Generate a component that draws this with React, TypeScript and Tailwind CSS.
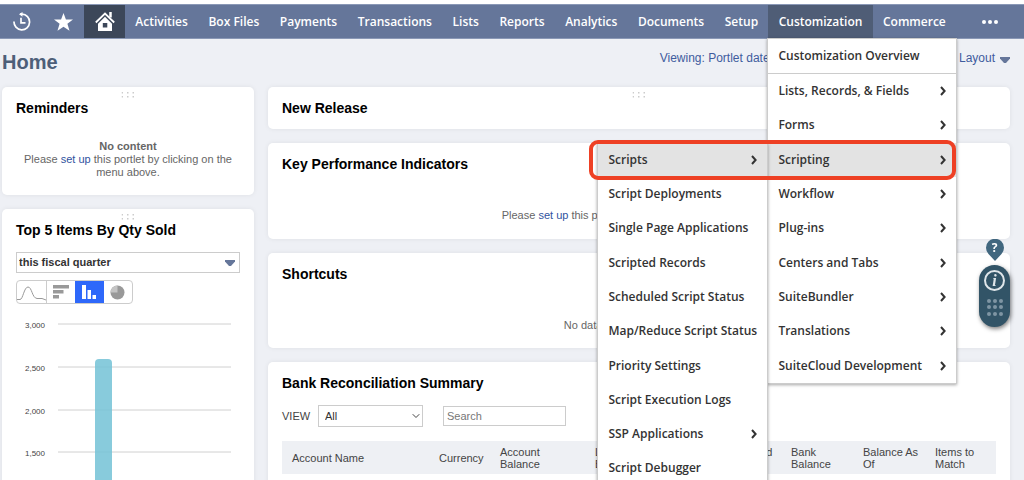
import type { ReactNode } from 'react';
import { ChevronDown } from 'lucide-react';
import clsx from 'clsx';

const tabs = [
  'Activities',
  'Box Files',
  'Payments',
  'Transactions',
  'Lists',
  'Reports',
  'Analytics',
  'Documents',
  'Setup',
  'Customization',
  'Commerce',
];

const customizationItems = [
  'Lists, Records, & Fields',
  'Forms',
  'Scripting',
  'Workflow',
  'Plug-ins',
  'Centers and Tabs',
  'SuiteBundler',
  'Translations',
  'SuiteCloud Development',
];

const scriptingItems = [
  { label: 'Scripts', children: true },
  { label: 'Script Deployments' },
  { label: 'Single Page Applications' },
  { label: 'Scripted Records' },
  { label: 'Scheduled Script Status' },
  { label: 'Map/Reduce Script Status' },
  { label: 'Priority Settings' },
  { label: 'Script Execution Logs' },
  { label: 'SSP Applications', children: true },
  { label: 'Script Debugger' },
];

const gridLines = [
  { label: '3,000', y: 8 },
  { label: '2,500', y: 51 },
  { label: '2,000', y: 94 },
  { label: '1,500', y: 136 },
];

export default function App() {
  return (
    <div className="h-screen overflow-hidden bg-[#eef0f5] font-['Liberation_Sans',Arial,sans-serif] text-[11px] text-[#666]">
      <NavBar />
      <PageHeader />
      <main className="grid grid-cols-[252px_1fr] items-start gap-3.5 pr-3.5 pl-0.5">
        <div className="flex flex-col gap-3.5">
          <Portlet title="Reminders" grip className="min-h-[108px]">
            <p className="mt-[23px] text-center leading-[13px]">
              <strong className="block">No content</strong>
              Please <SetUpLink /> this portlet by clicking on the menu above.
            </p>
          </Portlet>
          <TopItems />
        </div>
        <div className="flex min-w-0 flex-col gap-3.5">
          <Portlet title="New Release" grip className="min-h-[42px]" />
          <Portlet title="Key Performance Indicators" className="min-h-[96px]">
            <p className="mt-9 text-center leading-[13px]">
              Please <SetUpLink /> this portlet by clicking on the menu above.
            </p>
          </Portlet>
          <Portlet title="Shortcuts" className="min-h-[95px]">
            <p className="mt-9 text-center leading-[13px]">
              No data found for this shortcut.
            </p>
          </Portlet>
          <BankReconciliation />
        </div>
      </main>
      <HelpWidget />
    </div>
  );
}

function NavBar() {
  return (
    <header className="bg-white pt-1">
      <nav className="flex h-[35px] items-stretch border-y border-[#8a98b6] bg-[#65769a] font-['Open_Sans',sans-serif] text-xs font-semibold text-white">
        <button aria-label="Recent records" className="flex w-[43px] items-center justify-center">
          <HistoryIcon />
        </button>
        <button aria-label="Shortcuts" className="flex w-[41px] items-center justify-center">
          <StarIcon />
        </button>
        <button aria-label="Home" className="flex w-[41px] items-center justify-center bg-[#3c4759]">
          <HomeIcon />
        </button>
        <ul className="flex flex-1">
          {tabs.map((tab) => (
            <li key={tab} className="relative flex grow">
              <a
                href="#"
                className={clsx(
                  'flex grow items-center justify-center px-2.5',
                  tab === 'Customization' && 'bg-[#4f5d76]',
                )}
              >
                {tab}
              </a>
              {tab === 'Customization' && <CustomizationMenu />}
            </li>
          ))}
        </ul>
        <button aria-label="More" className="flex w-[68px] items-center justify-center gap-0.5">
          <span className="size-1 rounded-full bg-white" />
          <span className="size-1 rounded-full bg-white" />
          <span className="size-1 rounded-full bg-white" />
        </button>
      </nav>
    </header>
  );
}

function CustomizationMenu() {
  return (
    <div className="absolute top-full -left-px z-20 w-[190px] border border-[#ccc] bg-white text-[#333] shadow-[0_1px_3px_rgba(0,0,0,0.35)]">
      <a href="#" className="flex h-[35px] items-center border-b border-[#ccc] px-2.5">
        Customization Overview
      </a>
      <ul className="grid h-[309px] auto-rows-fr">
        {customizationItems.map((item) => (
          <li key={item} className="relative">
            <MenuLink label={item} arrow active={item === 'Scripting'} />
            {item === 'Scripting' && (
              <>
                <ScriptingMenu />
                <div className="pointer-events-none absolute -top-[3px] -left-[179px] z-30 h-10 w-[367px] rounded-[9px] border-4 border-[#ee4024]" />
              </>
            )}
          </li>
        ))}
      </ul>
    </div>
  );
}

function ScriptingMenu() {
  return (
    <ul className="absolute top-0 right-full grid h-[343px] w-[171px] auto-rows-fr border-x border-[#ccc] bg-white shadow-[0_1px_3px_rgba(0,0,0,0.35)]">
      {scriptingItems.map((item) => (
        <li key={item.label}>
          <MenuLink
            label={item.label}
            arrow={item.children}
            active={item.label === 'Scripts'}
          />
        </li>
      ))}
    </ul>
  );
}

interface MenuLinkProps {
  label: string;
  arrow?: boolean;
  active?: boolean;
}

function MenuLink({ label, arrow, active }: MenuLinkProps) {
  return (
    <a
      href="#"
      className={clsx(
        'flex h-full items-center justify-between px-2.5 whitespace-nowrap',
        active && 'bg-[#e3e3e3]',
      )}
    >
      {label}
      {arrow && (
        <svg width="6" height="10" viewBox="0 0 6 10" fill="none" stroke="#333" strokeWidth="2">
          <path d="M1 1l3.6 4L1 9" />
        </svg>
      )}
    </a>
  );
}

function PageHeader() {
  return (
    <div className="flex h-12 items-start justify-between pr-3.5 pl-0.5">
      <h1 className="pt-[11px] text-xl leading-6 font-bold text-[#4d5f79]">Home</h1>
      <div className="flex gap-[41px] pt-[11px] text-xs leading-4 text-[#3f5c9e]">
        <a href="#">Viewing: Portlet date settings</a>
        <a href="#">Personalize</a>
        <a href="#" className="flex items-center gap-[5px]">
          Layout
          <span className="pt-1">
            <Triangle />
          </span>
        </a>
      </div>
    </div>
  );
}

interface PortletProps {
  title: string;
  grip?: boolean;
  className?: string;
  children?: ReactNode;
}

function Portlet({ title, grip, className, children }: PortletProps) {
  return (
    <section
      className={clsx(
        'relative rounded-[5px] bg-white px-3.5 pt-3 shadow-[0_0_5px_rgba(0,0,0,0.07)]',
        className,
      )}
    >
      {grip && <Grip />}
      <h2 className="text-sm leading-[18px] font-bold text-black">{title}</h2>
      {children}
    </section>
  );
}

function TopItems() {
  return (
    <Portlet title="Top 5 Items By Qty Sold" grip className="min-h-[340px]">
      <div className="relative mt-[13px]">
        <select
          aria-label="Period"
          className="block h-[21px] w-full appearance-none border border-[#ccc] bg-white pl-0.5 text-[11px] font-bold text-[#333]"
        >
          <option>this fiscal quarter</option>
        </select>
        <span className="pointer-events-none absolute top-2 right-[5px]">
          <Triangle />
        </span>
      </div>
      <div className="mt-[7px] flex h-6 w-[117px] overflow-hidden rounded border border-[#ccc]">
        <button aria-label="Line chart" className="flex flex-1 items-center justify-center border-r border-[#ccc]">
          <svg width="29" height="22" viewBox="0 0 29 22" fill="none" stroke="#999" strokeWidth="1">
            <path d="M0 18.500h3c3 0 4-12.500 8-12.500s4 11 9 11.500h5l4 1.500" />
          </svg>
        </button>
        <button aria-label="Horizontal bar chart" className="flex flex-1 items-center justify-center">
          <svg width="16" height="14" viewBox="0 0 16 14" fill="#999">
            <path d="M0 0h16v3.500H0zM0 5h10.500v3.500H0zM0 10h6v3.500H0z" />
          </svg>
        </button>
        <button aria-label="Column chart" className="flex flex-1 items-center justify-center bg-[#2e68fa]">
          <svg width="14" height="14" viewBox="0 0 14 14" fill="#fff">
            <path d="M0 0h4v14H0zM5.500 5h3.500v9H5.500zM10.500 10h3.500v4h-3.500z" />
          </svg>
        </button>
        <button aria-label="Pie chart" className="flex flex-1 items-center justify-center">
          <svg width="15" height="15" viewBox="0 0 15 15">
            <circle cx="7.500" cy="7.500" r="7" fill="#999" />
            <path d="M7.500 7.500V.5A7 7 0 0 0 .5 7.500z" fill="#c4c4c4" />
          </svg>
        </button>
      </div>
      <svg className="mt-3 block w-full" height="190" role="img" aria-label="Quantity sold">
        {gridLines.map((line) => (
          <g key={line.label}>
            <text x="29" y={line.y + 4} textAnchor="end" fontSize="8" fill="#444">
              {line.label}
            </text>
            <line x1="42" x2="215" y1={line.y} y2={line.y} stroke="#d0d0d0" />
          </g>
        ))}
        <rect x="79" y="43" width="17" height="160" rx="4" fill="#73c2d6" fillOpacity="0.85" />
      </svg>
    </Portlet>
  );
}

function BankReconciliation() {
  return (
    <Portlet title="Bank Reconciliation Summary" className="min-h-[160px]">
      <div className="mt-[13px] flex items-center text-[#444]">
        <label htmlFor="view" className="w-9">
          VIEW
        </label>
        <div className="relative">
          <select
            id="view"
            className="block h-[22px] w-[105px] appearance-none border border-[#ccc] bg-white pl-1.5 text-[11px] text-[#333]"
          >
            <option>All</option>
          </select>
          <ChevronDown className="pointer-events-none absolute top-[5px] right-px size-3" />
        </div>
        <input
          aria-label="Search"
          placeholder="Search"
          className="ml-5 h-5 w-[123px] border border-[#ccc] bg-white px-[3px] text-[11px] placeholder:text-[#777]"
        />
      </div>
      <table className="mt-3.5 w-full table-fixed bg-[#eef0f4] text-left text-[11px] leading-3 text-[#444]">
        <thead>
          <tr className="h-[33px]">
            <th className="w-[147px] pl-2.5 font-normal">Account Name</th>
            <th className="w-[61px] pl-2.5 font-normal">Currency</th>
            <th className="w-[95px] pl-2.5 font-normal">
              Account
              <br />
              Balance
            </th>
            <th className="pl-2.5 font-normal">
              Ledger
              <br />
              Balance
            </th>
            <th className="w-[73px] pl-2.5 font-normal">
              Reconciled
              <br />
              Balance
            </th>
            <th className="w-[72px] pl-2.5 font-normal">
              Bank
              <br />
              Balance
            </th>
            <th className="w-[72px] pl-2.5 font-normal">
              Balance As
              <br />
              Of
            </th>
            <th className="w-[71px] pl-2.5 font-normal">
              Items to
              <br />
              Match
            </th>
          </tr>
        </thead>
      </table>
    </Portlet>
  );
}

function HelpWidget() {
  return (
    <aside className="fixed top-[239px] right-3.5 flex flex-col items-center gap-1">
      <button aria-label="Help" className="relative">
        <svg width="18" height="22" viewBox="0 0 18 22" className="block">
          <path d="M9 22L2.500 15a9 9 0 1 1 13 0z" fill="#41677f" />
        </svg>
        <span className="absolute inset-x-0 top-0 text-center font-['Open_Sans',sans-serif] text-xs leading-[18px] font-bold text-white">
          ?
        </span>
      </button>
      <div className="flex h-[62px] w-[31px] flex-col items-center gap-2 rounded-full bg-[#325467] pt-[5px] shadow-[1px_2px_4px_rgba(0,0,0,0.5)]">
        <button
          aria-label="Information"
          className="flex size-[21px] items-center justify-center rounded-full border-2 border-[#dfe6ea] font-['Liberation_Serif',serif] text-base leading-4 font-bold text-[#dfe6ea] italic"
        >
          i
        </button>
        <svg width="16" height="17" viewBox="0 0 16 17" fill="#7f95a3">
          {[2, 8, 14].map((cx) =>
            [2, 8, 15].map((cy) => <circle key={`${cx}-${cy}`} cx={cx} cy={cy} r="2" />),
          )}
        </svg>
      </div>
    </aside>
  );
}

function Grip() {
  return (
    <svg
      className="absolute top-[5px] left-1/2 -translate-x-1/2"
      width="13"
      height="6"
      viewBox="0 0 13 6"
      fill="#ccc"
    >
      <path d="M0 0h1.500v1.500H0zM5.500 0h1.500v1.500H5.500zM11 0h1.500v1.500H11zM0 4h1.500v1.500H0zM5.500 4h1.500v1.500H5.500zM11 4h1.500v1.500H11z" />
    </svg>
  );
}

function SetUpLink() {
  return (
    <a href="#" className="text-[#2f52a0]">
      set up
    </a>
  );
}

function Triangle() {
  return (
    <svg width="10" height="6" viewBox="0 0 10 6" fill="#65769a">
      <path d="M0 0h10v1.500L6 6H4L0 1.500z" />
    </svg>
  );
}

function HistoryIcon() {
  return (
    <svg width="18" height="19" viewBox="0 0 18 19" fill="none" stroke="#fff" strokeWidth="1.700">
      <path d="M1 9.500A7.800 7.800 0 1 0 9 2.200H7" />
      <path d="M9.500 0L6 2.300l3.500 2.500z" fill="#fff" stroke="none" />
      <path d="M8 5.800v5h4.500" />
    </svg>
  );
}

function StarIcon() {
  return (
    <svg width="19" height="18" viewBox="0 0 18 17" fill="#fff">
      <path d="M9 0l2.300 6.200H18l-5.300 4 2 6.600L9 12.900l-5.700 3.900 2-6.600L0 6.200h6.700z" />
    </svg>
  );
}

function HomeIcon() {
  return (
    <svg width="20" height="20" viewBox="0 0 20 20" fill="none" stroke="#fff">
      <path d="M.8 10.500L10 1.500l9.200 9" strokeWidth="1.800" />
      <path d="M15.500 0v5.500" strokeWidth="2.500" />
      <path
        d="M10 4.800l7 6.900V19H3v-7.300zM7.800 11v4.500h4.500V11z"
        fill="#fff"
        fillRule="evenodd"
        stroke="none"
      />
    </svg>
  );
}
